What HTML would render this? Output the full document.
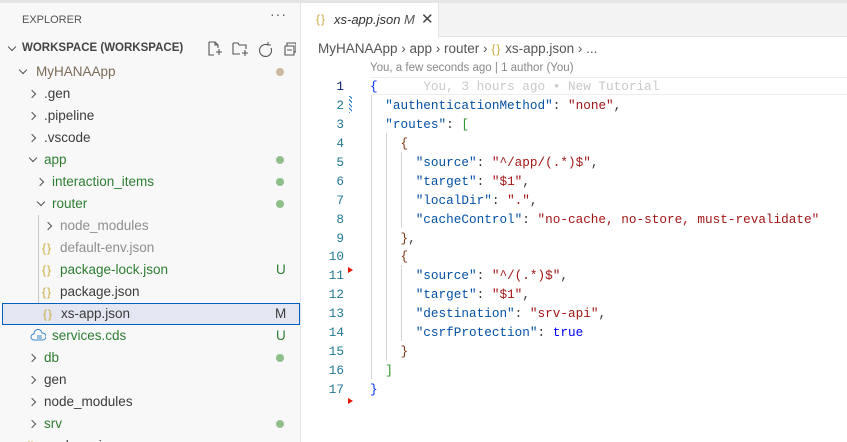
<!DOCTYPE html>
<html><head><meta charset="utf-8"><style>
*{margin:0;padding:0;box-sizing:border-box}
body{width:847px;height:442px;overflow:hidden;background:#fff;font-family:"Liberation Sans","DejaVu Sans",sans-serif;position:relative;font-size:13.5px;color:#3b3b3b}
#top{position:absolute;left:0;top:0;width:847px;height:3px;background:#e5e5e5}
#side{position:absolute;left:0;top:3px;width:301px;height:439px;background:#f8f8f8;border-right:1px solid #e5e5e5;overflow:hidden}
.a{position:absolute;white-space:nowrap}
.row{position:absolute;left:0;width:301px;height:22px;line-height:22px}
.chev{position:absolute;width:6px;height:6px;border-right:1.2px solid #555;border-bottom:1.2px solid #555}
.r{transform:rotate(-45deg)}
.d{transform:rotate(45deg)}
.dot{position:absolute;left:276px;top:7px;width:8px;height:8px;border-radius:50%;background:#8fbf8a}
.br{font-family:"Liberation Sans",sans-serif;color:#cbaa3c;font-size:12px;letter-spacing:1px}
.g{color:#2e7d32}.gr{color:#8e8e8e}
.code{position:absolute;left:370px;font-family:"Liberation Mono",monospace;font-size:12.7px;white-space:pre;color:#333}
.ln{position:absolute;width:344px;left:0;text-align:right;font-family:"Liberation Mono",monospace;font-size:12.7px;color:#237893}
.k{color:#0451a5}.s{color:#a31515}.b1{color:#0431fa}.b2{color:#319331}.b3{color:#7b3814}.t{color:#0000ff}
</style></head><body>
<div id="top"></div>
<div id="side">
<div class="a" style="left:22px;top:11px;font-size:11px;color:#555">EXPLORER</div>
<div class="a" style="left:270px;top:3px;font-size:14px;color:#555;letter-spacing:1px">···</div>
<div class="chev d" style="left:9px;top:41px"></div>
<div class="a" style="left:22px;top:39px;font-size:11.5px;font-weight:bold;color:#444">WORKSPACE (WORKSPACE)</div>
<svg class="a" style="left:206px;top:37px" width="90" height="18" fill="none" stroke="#555" stroke-width="1.1">
<path d="M3 2h6l3 3v3M3 2v13h5M12 5h-3V2M10 12h6M13 9v6"/>
<path d="M27 3h5l1 2h7v4M27 3v11h7M36 13h6M39 10v6"/>
<path d="M62 5a6 6 0 1 0 3 3M62 2v3h3"/>
<path d="M79 6h9v9h-9zM81 6V3h9v9h-2M81 10h5"/>
</svg>
<div style="position:absolute;left:0;top:58px">
<div class="row" style="top:0"><div class="chev d" style="left:20px;top:6px"></div><span class="a" style="left:36px;color:#7b6c57">MyHANAApp</span><div class="dot" style="background:#cdb99f"></div></div>
<div class="row" style="top:22px"><div class="chev r" style="left:29px;top:8px"></div><span class="a" style="left:44px">.gen</span></div>
<div class="row" style="top:44px"><div class="chev r" style="left:29px;top:8px"></div><span class="a" style="left:44px">.pipeline</span></div>
<div class="row" style="top:66px"><div class="chev r" style="left:29px;top:8px"></div><span class="a" style="left:44px">.vscode</span></div>
<div class="row" style="top:88px"><div class="chev d" style="left:30px;top:6px"></div><span class="a g" style="left:44px">app</span><div class="dot"></div></div>
<div class="row" style="top:110px"><div class="chev r" style="left:37px;top:8px"></div><span class="a g" style="left:52px">interaction_items</span><div class="dot"></div></div>
<div class="row" style="top:132px"><div class="chev d" style="left:38px;top:6px"></div><span class="a g" style="left:52px">router</span><div class="dot"></div></div>
<div class="a" style="left:38px;top:154px;width:1px;height:110px;background:#c8c8c8"></div>
<div class="row" style="top:154px"><div class="chev r" style="left:45px;top:8px"></div><span class="a gr" style="left:60px">node_modules</span></div>
<div class="row" style="top:176px"><span class="a br" style="left:42px">{}</span><span class="a gr" style="left:60px">default-env.json</span></div>
<div class="row" style="top:198px"><span class="a br" style="left:42px">{}</span><span class="a g" style="left:60px">package-lock.json</span><span class="a g" style="left:276px">U</span></div>
<div class="row" style="top:220px"><span class="a br" style="left:42px">{}</span><span class="a" style="left:60px">package.json</span></div>
<div class="row" style="top:242px;background:#e4e6f1;border:1px solid #0060c0;left:2px;width:298px"><span class="a br" style="left:40px;top:-1px">{}</span><span class="a" style="left:58px;top:-1px">xs-app.json</span><span class="a" style="left:272px;top:-1px">M</span></div>
<div class="row" style="top:264px"><svg class="a" style="left:30px;top:4px" width="16" height="14" fill="none" stroke="#3d87c8" stroke-width="1"><path d="M4 11a3 3 0 0 1 0-6 4 4 0 0 1 8-1 3.5 3.5 0 0 1 1 7z"/><path d="M7 7h5M7 9h5M6 11h6"/></svg><span class="a g" style="left:52px">services.cds</span><span class="a g" style="left:276px">U</span></div>
<div class="row" style="top:286px"><div class="chev r" style="left:29px;top:8px"></div><span class="a g" style="left:44px">db</span><div class="dot"></div></div>
<div class="row" style="top:308px"><div class="chev r" style="left:29px;top:8px"></div><span class="a" style="left:44px">gen</span></div>
<div class="row" style="top:330px"><div class="chev r" style="left:29px;top:8px"></div><span class="a" style="left:44px">node_modules</span></div>
<div class="row" style="top:352px"><div class="chev r" style="left:29px;top:8px"></div><span class="a g" style="left:44px">srv</span><div class="dot"></div></div>
<div class="row" style="top:374px"><span class="a br" style="left:26px">{}</span><span class="a" style="left:44px">package.json</span></div>
</div>
</div>
<!-- tabs -->
<div class="a" style="left:302px;top:3px;width:545px;height:34px;background:#f3f3f3;border-bottom:1px solid #e5e5e5"></div>
<div class="a" style="left:302px;top:3px;width:137px;height:35px;background:#fff;border-right:1px solid #e5e5e5"></div>
<span class="a br" style="left:316px;top:12px">{}</span>
<span class="a" style="left:334px;top:12px;font-size:13px;font-style:italic;color:#333">xs-app.json</span>
<span class="a" style="left:404px;top:12px;font-size:13px;font-style:italic;color:#555">M</span>
<span class="a" style="left:421px;top:10px;font-size:15px;color:#444">✕</span>
<!-- breadcrumb -->
<div class="a" style="left:318px;top:41px;color:#555">MyHANAApp › app › router › <span class="br">{}</span> xs-app.json › ...</div>
<div class="a" style="left:370px;top:62px;font-size:11.5px;color:#888">You, a few seconds ago | 1 author (You)</div>
<!-- current line -->
<div class="a" style="left:370px;top:77px;width:477px;height:18px;border-top:1px solid #eee;border-bottom:1px solid #eee"></div>
<div class="a" style="left:349px;top:96px;width:3px;height:17px;background:repeating-linear-gradient(45deg,#1f74c8 0 1px,#fff 1px 3px)"></div>
<div class="a" style="left:348px;top:267px;border-left:5px solid #e51400;border-top:3px solid transparent;border-bottom:3px solid transparent"></div>
<div class="a" style="left:348px;top:398px;border-left:5px solid #e51400;border-top:3px solid transparent;border-bottom:3px solid transparent"></div>
<!-- indent guides -->
<div class="a" style="left:371px;top:95px;width:1px;height:284px;background:#d3d3d3"></div>
<div class="a" style="left:386px;top:133px;width:1px;height:227px;background:#d3d3d3"></div>
<div class="a" style="left:401px;top:152px;width:1px;height:76px;background:#d3d3d3"></div>
<div class="a" style="left:401px;top:265px;width:1px;height:76px;background:#d3d3d3"></div>
<div id="code" style="position:absolute;left:0;top:78px;line-height:18.94px">
<div class="ln" style="top:0;color:#0b216f">1</div><div class="ln" style="top:18.94px">2</div><div class="ln" style="top:37.88px">3</div><div class="ln" style="top:56.82px">4</div><div class="ln" style="top:75.76px">5</div><div class="ln" style="top:94.7px">6</div><div class="ln" style="top:113.64px">7</div><div class="ln" style="top:132.58px">8</div><div class="ln" style="top:151.52px">9</div><div class="ln" style="top:170.46px">10</div><div class="ln" style="top:189.4px">11</div><div class="ln" style="top:208.34px">12</div><div class="ln" style="top:227.28px">13</div><div class="ln" style="top:246.22px">14</div><div class="ln" style="top:265.16px">15</div><div class="ln" style="top:284.1px">16</div><div class="ln" style="top:303.04px">17</div>
<div class="code" style="top:0"><span class="b1">{</span>      <span style="color:#c8c8c8">You, 3 hours ago • New Tutorial</span>
  <span class="k">"authenticationMethod"</span>: <span class="s">"none"</span>,
  <span class="k">"routes"</span>: <span class="b2">[</span>
    <span class="b3">{</span>
      <span class="k">"source"</span>: <span class="s">"^/app/(.*)$"</span>,
      <span class="k">"target"</span>: <span class="s">"$1"</span>,
      <span class="k">"localDir"</span>: <span class="s">"."</span>,
      <span class="k">"cacheControl"</span>: <span class="s">"no-cache, no-store, must-revalidate"</span>
    <span class="b3">}</span>,
    <span class="b3">{</span>
      <span class="k">"source"</span>: <span class="s">"^/(.*)$"</span>,
      <span class="k">"target"</span>: <span class="s">"$1"</span>,
      <span class="k">"destination"</span>: <span class="s">"srv-api"</span>,
      <span class="k">"csrfProtection"</span>: <span class="t">true</span>
    <span class="b3">}</span>
  <span class="b2">]</span>
<span class="b1">}</span></div>
</div>
</body></html>
